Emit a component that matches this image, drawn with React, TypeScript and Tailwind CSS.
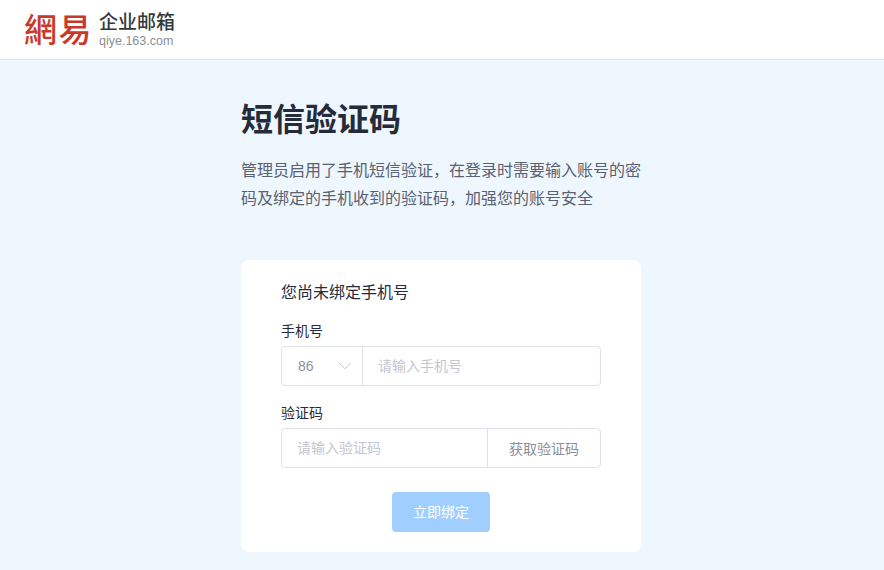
import { ChevronDown } from 'lucide-react'

const cjk = "font-['Liberation_Sans','Noto_Sans_CJK_SC',sans-serif]"

export default function App() {
  return (
    <div className={`h-[570px] overflow-hidden bg-[#eef6fe] ${cjk}`}>
      <header className="flex h-[60px] items-center border-b border-[#dfe3e8] bg-white pl-6">
        <span className="-mt-[3px] font-['Noto_Sans_CJK_TC',sans-serif] text-[33px] leading-none font-medium tracking-[1.5px] text-[#c8392b]">
          網易
        </span>
        <div className="ml-[6px] flex flex-col">
          <span className="text-[19px] leading-[22px] font-medium text-[#33393d]">企业邮箱</span>
          <span className="text-[12.5px] leading-[14px] text-[#8a9196]">qiye.163.com</span>
        </div>
      </header>

      <main className="ml-[241px] w-[400px]">
        <h1 className="mt-[36px] text-[32px] leading-[48px] font-bold text-[#252b3a]">短信验证码</h1>
        <p className="mt-[13px] text-[16px] leading-[28px] text-[#5a6172]">
          管理员启用了手机短信验证，在登录时需要输入账号的密码及绑定的手机收到的验证码，加强您的账号安全
        </p>

        <section className="mt-[47px] h-[292px] rounded-lg bg-white px-10 pt-[21px]">
          <div className="text-[16px] leading-[24px] text-[#252b3a]">您尚未绑定手机号</div>

          <label className="mt-[15px] block text-[14px] leading-[22px] text-[#252b3a]">手机号</label>
          <div className="mt-[4px] flex h-10 rounded border border-[#dfe1e8] text-[14px]">
            <div className="flex w-[81px] items-center justify-between border-r border-[#dfe1e8] pr-[6px] pl-4 text-[#8a919f]">
              <span>86</span>
              <ChevronDown className="h-[22px] w-[22px] text-[#c0c4cc]" strokeWidth={1} />
            </div>
            <div className="flex flex-1 items-center pl-[15px] text-[#c4c6cf]">请输入手机号</div>
          </div>

          <label className="mt-[16px] block text-[14px] leading-[22px] text-[#252b3a]">验证码</label>
          <div className="mt-[4px] flex h-10 rounded border border-[#dfe1e8] text-[14px]">
            <div className="flex flex-1 items-center pl-[15px] text-[#c4c6cf]">请输入验证码</div>
            <div className="flex w-[113px] items-center justify-center border-l border-[#dfe1e8] pt-[2px] text-[#8a8e99]">
              获取验证码
            </div>
          </div>

          <div className="mt-6 flex justify-center">
            <button className="h-10 w-[98px] rounded bg-[#a0cfff] text-[14px] text-white">立即绑定</button>
          </div>
        </section>
      </main>
    </div>
  )
}
